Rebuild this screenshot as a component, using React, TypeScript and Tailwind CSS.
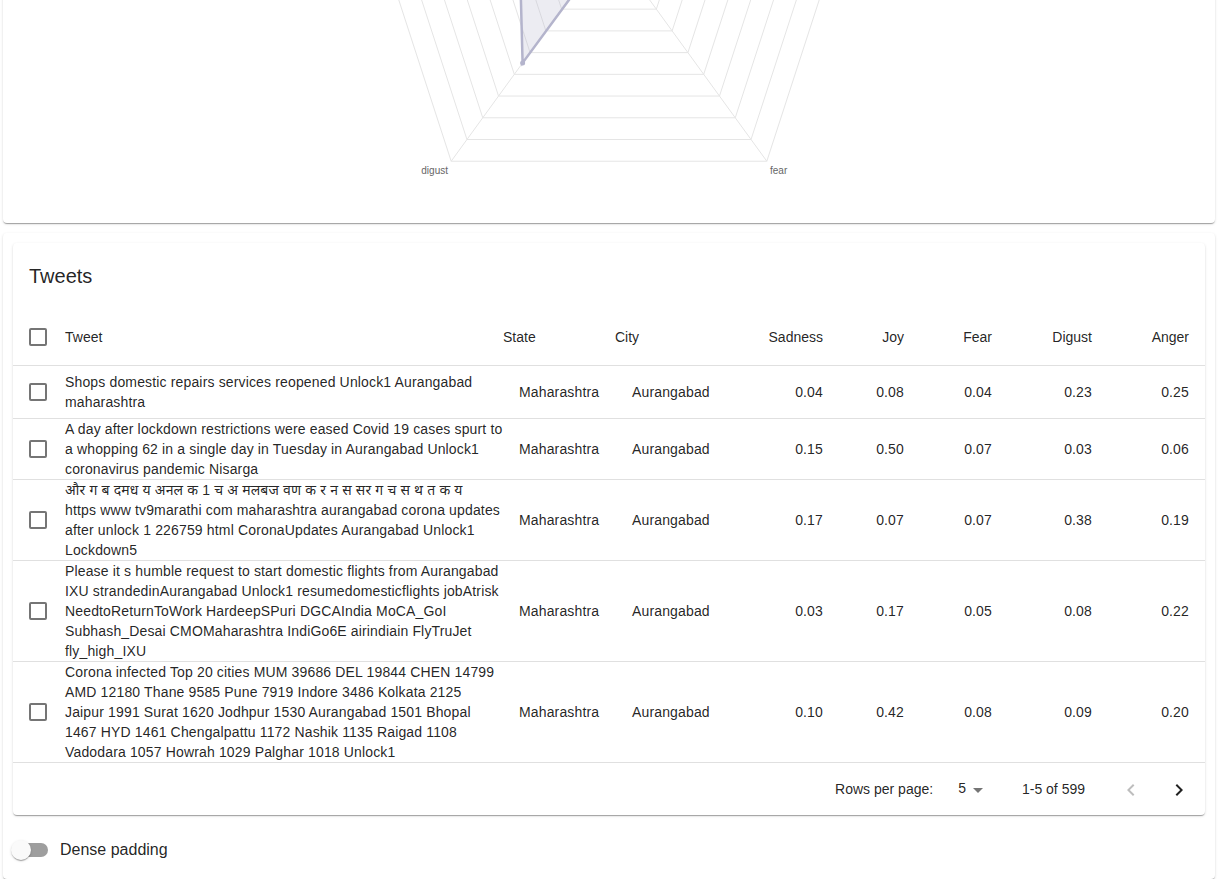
import React from 'react';

const paperShadow =
  'shadow-[0px_2px_1px_-1px_rgba(0,0,0,0.2),0px_1px_1px_0px_rgba(0,0,0,0.14),0px_1px_3px_0px_rgba(0,0,0,0.12)]';

const tweets = [
  {
    text: 'Shops domestic repairs services reopened Unlock1 Aurangabad maharashtra',
    vals: ['0.04', '0.08', '0.04', '0.23', '0.25'],
  },
  {
    text: 'A day after lockdown restrictions were eased Covid 19 cases spurt to a whopping 62 in a single day in Tuesday in Aurangabad Unlock1 coronavirus pandemic Nisarga',
    vals: ['0.15', '0.50', '0.07', '0.03', '0.06'],
  },
  {
    text: 'और ग ब दमध य अनल क 1 च अ मलबज वण क र न स सर ग च स थ त क य\nhttps www tv9marathi com maharashtra aurangabad corona updates after unlock 1 226759 html CoronaUpdates Aurangabad Unlock1 Lockdown5',
    vals: ['0.17', '0.07', '0.07', '0.38', '0.19'],
  },
  {
    text: 'Please it s humble request to start domestic flights from Aurangabad IXU strandedinAurangabad Unlock1 resumedomesticflights jobAtrisk NeedtoReturnToWork HardeepSPuri DGCAIndia MoCA_GoI Subhash_Desai CMOMaharashtra IndiGo6E airindiain FlyTruJet fly_high_IXU',
    vals: ['0.03', '0.17', '0.05', '0.08', '0.22'],
  },
  {
    text: 'Corona infected Top 20 cities MUM 39686 DEL 19844 CHEN 14799 AMD 12180 Thane 9585 Pune 7919 Indore 3486 Kolkata 2125 Jaipur 1991 Surat 1620 Jodhpur 1530 Aurangabad 1501 Bhopal 1467 HYD 1461 Chengalpattu 1172 Nashik 1135 Raigad 1108 Vadodara 1057 Howrah 1029 Palghar 1018 Unlock1',
    vals: ['0.10', '0.42', '0.08', '0.09', '0.20'],
  },
];

// radar geometry, in page coordinates
const cx = 609;
const cy = -56;
const R = 268.5;
const angles = [-90, -18, 54, 126, 198].map((a) => (a * Math.PI) / 180);
const pt = (r: number, i: number) => [cx + r * Math.cos(angles[i]), cy + r * Math.sin(angles[i])];
const poly = (rs: number[]) => rs.map((r, i) => pt(r, i).join(',')).join(' ');

function Radar() {
  const levels = Array.from({ length: 10 }, (_, k) => (R * (k + 1)) / 10);
  const data = [0.42 * R, 0.3 * R, 1, 147, 95];
  const dig = pt(147, 3);
  return (
    <svg width="1212" height="399" viewBox="3 -176 1212 399" className="block">
      {levels.map((r, k) => (
        <polygon key={k} points={poly([r, r, r, r, r])} fill="none" stroke="#e5e5e5" strokeWidth="1" />
      ))}
      {angles.map((_, i) => {
        const [x, y] = pt(R, i);
        return <line key={i} x1={cx} y1={cy} x2={x} y2={y} stroke="#e5e5e5" strokeWidth="1" />;
      })}
      <polygon points={poly(data)} fill="#b4b4cc" fillOpacity="0.25" stroke="#b4b4cc" strokeWidth="2.5" />
      <circle cx={dig[0]} cy={dig[1]} r="2.5" fill="#b4b4cc" />
      <text x="448" y="174" textAnchor="end" fontSize="10" fill="#666" fontFamily="Liberation Sans, Arial, sans-serif">
        digust
      </text>
      <text x="770" y="174" textAnchor="start" fontSize="10" fill="#666" fontFamily="Liberation Sans, Arial, sans-serif">
        fear
      </text>
    </svg>
  );
}

function Box() {
  return <span className="block w-[18px] h-[18px] border-2 border-[#757575] rounded-[2px]" />;
}

export default function App() {
  const numHeads = ['Sadness', 'Joy', 'Fear', 'Digust', 'Anger'];
  return (
    <div
      className="bg-white min-h-screen pl-[3px] pr-[11px] text-[rgba(0,0,0,0.87)]"
      style={{ fontFamily: '"Liberation Sans", Arial, "Noto Sans Devanagari", "Noto Sans", sans-serif' }}
    >
      {/* chart card, scrolled partly out of view */}
      <div className={`-mt-[176px] h-[399px] bg-white rounded overflow-hidden ${paperShadow}`}>
        <Radar />
      </div>

      <div className={`mt-[10px] p-[10px] bg-white rounded ${paperShadow}`}>
        <div className={`bg-white rounded mb-[16px] ${paperShadow}`}>
          <div className="h-16 flex items-center pl-4 pt-[2px]">
            <h2 className="text-[20px] leading-[32px]">Tweets</h2>
          </div>

          <table className="w-full table-fixed text-[14px] leading-[20px]">
            <colgroup>
              <col className="w-[48px]" />
              <col className="w-[442px]" />
              <col className="w-[112px]" />
              <col className="w-[124px]" />
              <col className="w-[100px]" />
              <col className="w-[81px]" />
              <col className="w-[88px]" />
              <col className="w-[100px]" />
              <col className="w-[97px]" />
            </colgroup>
            <thead>
              <tr className="border-b border-[#e0e0e0]">
                <th className="h-[58px] p-0 pt-[2px] align-middle">
                  <div className="pl-4">
                    <Box />
                  </div>
                </th>
                <th className="p-0 pt-[2px] pl-[4px] text-left font-normal align-middle">Tweet</th>
                <th className="p-0 pt-[2px] text-left font-normal align-middle">State</th>
                <th className="p-0 pt-[2px] text-left font-normal align-middle">City</th>
                {numHeads.map((h) => (
                  <th key={h} className="p-0 pt-[2px] pr-4 text-right font-normal align-middle">
                    {h}
                  </th>
                ))}
              </tr>
            </thead>
            <tbody className="tracking-[0.15px]">
              {tweets.map((t, i) => (
                <tr key={i} className="border-b border-[#e0e0e0]">
                  <td className="p-0 align-middle">
                    <div className="h-[52px] flex items-center pl-4">
                      <Box />
                    </div>
                  </td>
                  <td className="p-0 pl-[4px] align-middle">
                    <div className="w-[439px] whitespace-pre-line">{t.text}</div>
                  </td>
                  <td className="p-0 pl-4 align-middle">Maharashtra</td>
                  <td className="p-0 pl-[17px] align-middle">Aurangabad</td>
                  {t.vals.map((v, j) => (
                    <td key={j} className="p-0 pr-4 text-right align-middle">
                      {v}
                    </td>
                  ))}
                </tr>
              ))}
            </tbody>
          </table>

          <div className="h-[52px] flex items-center justify-end pr-[2px] text-[14px] pt-[2px]">
            <span>Rows per page:</span>
            <div className="ml-[17px] flex items-center">
              <span className="pl-2 -mt-[2px]">5</span>
              <svg width="24" height="24" viewBox="0 0 24 24" fill="rgba(0,0,0,0.54)">
                <path d="M7 10l5 5 5-5z" />
              </svg>
            </div>
            <span className="ml-[32px]">1-5 of 599</span>
            <div className="ml-[22px] flex">
              <button className="w-12 h-12 flex items-center justify-center">
                <svg width="24" height="24" viewBox="0 0 24 24" fill="rgba(0,0,0,0.26)">
                  <path d="M15.41 7.41L14 6l-6 6 6 6 1.41-1.41L10.83 12z" />
                </svg>
              </button>
              <button className="w-12 h-12 flex items-center justify-center">
                <svg width="24" height="24" viewBox="0 0 24 24" fill="#222">
                  <path d="M10 6L8.59 7.41 13.17 12l-4.58 4.59L10 18l6-6z" />
                </svg>
              </button>
            </div>
          </div>
        </div>

        <label className="-ml-[11px] h-[38px] flex items-center">
          <span className="relative w-[58px] h-[38px] shrink-0">
            <span className="absolute left-[12px] top-[12px] w-[34px] h-[14px] rounded-full bg-[#9e9e9e]" />
            <span className="absolute left-[9px] top-[9px] w-5 h-5 rounded-full bg-[#fafafa] shadow-[0px_2px_1px_-1px_rgba(0,0,0,0.2),0px_1px_1px_0px_rgba(0,0,0,0.14),0px_1px_3px_0px_rgba(0,0,0,0.12)]" />
          </span>
          <span className="text-[16px] leading-[24px]">Dense padding</span>
        </label>
      </div>
    </div>
  );
}
